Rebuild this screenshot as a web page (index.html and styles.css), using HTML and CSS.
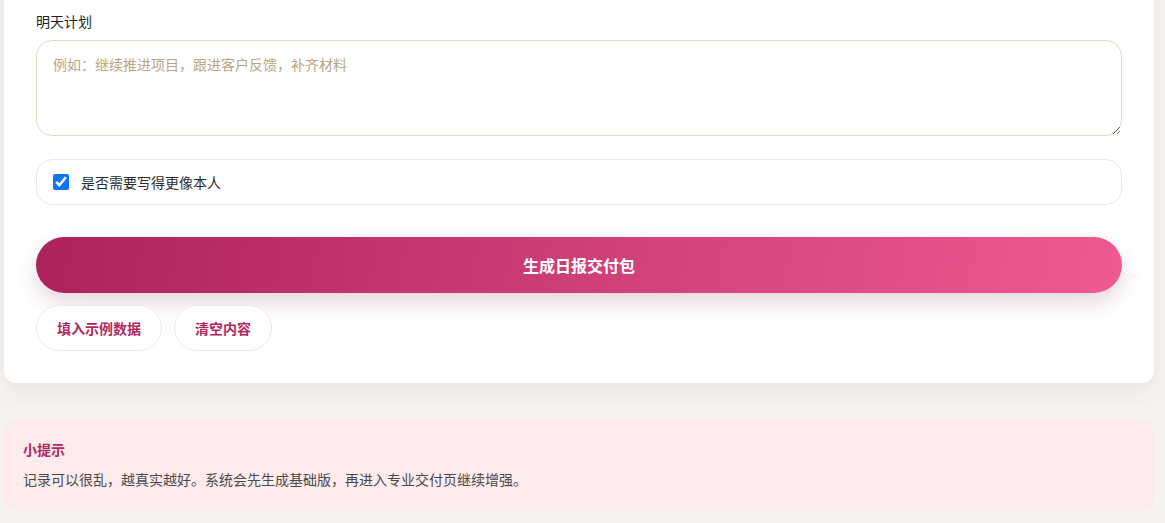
FILE: index.html
```html
<!DOCTYPE html>
<html lang="zh-CN">
<head>
    <meta charset="UTF-8">
    <title>日报交付包</title>
    <link rel="stylesheet" href="styles.css">
</head>
<body>
    <div class="page">
        <div class="card">
            <label class="field-label" for="plan">明天计划</label>
            <textarea id="plan" placeholder="例如：继续推进项目，跟进客户反馈，补齐材料"></textarea>

            <label class="check-row">
                <input type="checkbox" id="like-me" checked>
                <span>是否需要写得更像本人</span>
            </label>

            <button class="primary">生成日报交付包</button>

            <div class="actions">
                <button class="ghost">填入示例数据</button>
                <button class="ghost">清空内容</button>
            </div>
        </div>

        <div class="tip">
            <div class="tip-title">小提示</div>
            <p>记录可以很乱，越真实越好。系统会先生成基础版，再进入专业交付页继续增强。</p>
        </div>
    </div>
</body>
</html>
```

FILE: styles.css
```css
html, body {
    margin: 0;
    background: #f6f4f1;
    font-family: "Noto Sans CJK SC", "Noto Sans", sans-serif;
    color: #2b2b2b;
    overflow: hidden;
}
.page {
    padding: 0 11px 12px 4px;
}
.card {
    margin-top: -40px;
    padding: 52px 32px 32px;
    background: #fff;
    border-radius: 12px;
    box-shadow: 0 8px 24px rgba(60, 40, 20, 0.08);
}
.field-label {
    display: block;
    font-size: 14px;
    line-height: 18px;
    margin-bottom: 10px;
    color: #222;
}
textarea {
    display: block;
    box-sizing: border-box;
    width: 100%;
    height: 96px;
    padding: 12px 16px;
    border: 1px solid #e2d9c3;
    border-radius: 16px;
    font-family: inherit;
    font-size: 14px;
    line-height: 22px;
    color: #333;
    resize: vertical;
    outline: none;
}
textarea::placeholder {
    color: #b9a583;
}
.check-row {
    display: flex;
    align-items: center;
    gap: 12px;
    box-sizing: border-box;
    height: 46px;
    margin-top: 23px;
    padding: 0 16px;
    border: 1px solid #efe9de;
    border-radius: 16px;
    font-size: 14px;
    color: #2b2b2b;
}
.check-row input {
    width: 16px;
    height: 16px;
    margin: 0;
    accent-color: #0a75ff;
}
.primary {
    display: block;
    width: 100%;
    height: 56px;
    margin-top: 32px;
    border: none;
    border-radius: 28px;
    background: linear-gradient(100deg, #ab225d 0%, #ce3f78 50%, #ef5a90 100%);
    color: #fff;
    font-family: inherit;
    font-size: 16px;
    font-weight: 700;
    box-shadow: 0 10px 20px rgba(120, 40, 70, 0.18);
    cursor: pointer;
}
.actions {
    display: flex;
    gap: 12px;
    margin-top: 12px;
}
.ghost {
    height: 46px;
    padding: 0 20px;
    border: 1px solid #efebe6;
    border-radius: 23px;
    background: #fff;
    color: #b02a60;
    font-family: inherit;
    font-size: 14px;
    font-weight: 700;
    cursor: pointer;
}
.tip {
    margin-top: 37px;
    padding: 19px 19px 22px;
    background: #fdebee;
    border-radius: 12px;
}
.tip-title {
    font-size: 14px;
    font-weight: 700;
    line-height: 20px;
    color: #b02a60;
}
.tip p {
    margin: 10px 0 0;
    font-size: 14px;
    line-height: 20px;
    color: #4a4a4a;
}
```
